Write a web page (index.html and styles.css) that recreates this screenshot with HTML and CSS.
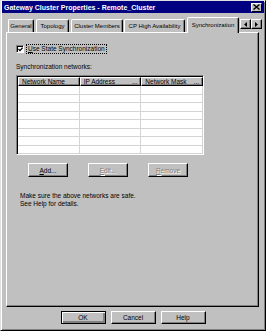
FILE: index.html
```html
<!DOCTYPE html>
<html>
<head>
    <link rel="stylesheet" href="styles.css">
    <title>Gateway Cluster Properties</title>
</head>
<body>
<div class="window">
    <div class="titlebar">
        <span class="title">Gateway Cluster Properties - Remote_Cluster</span>
        <span class="close">
            <svg width="7" height="6" viewBox="0 0 7 6"><path d="M0.5 0.5 L6.5 5.5 M6.5 0.5 L0.5 5.5" stroke="#000" stroke-width="1.4"/></svg>
        </span>
    </div>

    <div class="tabs">
        <div class="tab t-general">General</div>
        <div class="tab t-topology">Topology</div>
        <div class="tab t-members">Cluster Members</div>
        <div class="tab t-ha">CP High Availability</div>
        <div class="tab t-sync active">Synchronization</div>
        <div class="scroller">
            <span class="arrow"><svg width="3" height="5" viewBox="0 0 3 5"><path d="M3 0 L0 2.5 L3 5 Z" fill="#000"/></svg></span>
            <span class="arrow"><svg width="3" height="5" viewBox="0 0 3 5"><path d="M0 0 L3 2.5 L0 5 Z" fill="#000"/></svg></span>
        </div>
    </div>

    <div class="panel">
        <div class="check">
            <span class="box">
                <svg width="5" height="5" viewBox="0 0 5 5"><path d="M0.5 2 L2 3.6 L4.6 0.6" stroke="#000" stroke-width="1.3" fill="none"/></svg>
            </span>
            <span class="focus"><u>U</u>se State Synchronization</span>
        </div>

        <div class="caption">Synchronization networks:</div>

        <div class="list">
            <div class="list-head">
                <div class="col">Network Name</div>
                <div class="col">IP Address<span>...</span></div>
                <div class="col">Network Mask<span>...</span></div>
            </div>
            <div class="list-body">
                <div class="row"><div class="cell"></div><div class="cell"></div><div class="cell"></div></div>
                <div class="row"><div class="cell"></div><div class="cell"></div><div class="cell"></div></div>
                <div class="row"><div class="cell"></div><div class="cell"></div><div class="cell"></div></div>
                <div class="row"><div class="cell"></div><div class="cell"></div><div class="cell"></div></div>
                <div class="row"><div class="cell"></div><div class="cell"></div><div class="cell"></div></div>
                <div class="row"><div class="cell"></div><div class="cell"></div><div class="cell"></div></div>
                <div class="row"><div class="cell"></div><div class="cell"></div><div class="cell"></div></div>
                <div class="row"><div class="cell"></div><div class="cell"></div><div class="cell"></div></div>
            </div>
        </div>

        <div class="actions">
            <button class="btn"><u>A</u>dd...</button>
            <button class="btn" disabled><u>E</u>dit...</button>
            <button class="btn" disabled><u>R</u>emove</button>
        </div>

        <p class="note">Make sure the above networks are safe.<br>See Help for details.</p>
    </div>

    <div class="footer">
        <button class="btn default">OK</button>
        <button class="btn">Cancel</button>
        <button class="btn">Help</button>
    </div>
</div>
</body>
</html>
```

FILE: styles.css
```css
body
{
    margin:0;
    background-color:#c0c0c0;
    font-family:"Liberation Sans", Arial, sans-serif;
    font-size:6.5px;
    color:#000;
}
.window
{
    width:266px;
    height:331px;
    box-sizing:border-box;
    border:1px solid;
    border-color:#dfdfdf #000 #000 #dfdfdf;
    box-shadow:inset 1px 1px #fff, inset -1px -1px #808080;
    display:flex;
    flex-direction:column;
}
.titlebar
{
    height:12px;
    margin:0 1px;
    padding:0 2px;
    background-color:#000080;
    display:flex;
    align-items:center;
    justify-content:space-between;
}
.title
{
    color:#fff;
    font-weight:bold;
    font-size:7px;
}
.close
{
    width:11px;
    height:9px;
    box-sizing:border-box;
    background-color:#c0c0c0;
    border:1px solid;
    border-color:#fff #000 #000 #fff;
    display:flex;
    align-items:center;
    justify-content:center;
}
.close svg
{
    display:block;
}

/* tab strip */
.tabs
{
    height:19px;
    padding-left:7px;
    display:flex;
    align-items:flex-end;
    font-size:6px;
}
.tab
{
    height:13px;
    box-sizing:border-box;
    margin-right:2px;
    border:1px solid;
    border-bottom:none;
    border-color:#fff #000 transparent #fff;
    border-radius:2px 2px 0 0;
    box-shadow:inset -1px 0 #808080;
    display:flex;
    align-items:center;
    justify-content:center;
    white-space:nowrap;
}
.t-general { width:26px; }
.t-topology { width:33px; }
.t-members { width:52px; margin-right:1px; }
.t-ha { width:61px; }
.t-sync { width:52px; margin-right:1px; }
.tab.active
{
    height:16px;
    margin-bottom:-1px;
    padding-bottom:2px;
    background-color:#c0c0c0;
    position:relative;
    z-index:1;
}
.scroller
{
    display:flex;
    align-self:flex-start;
    margin-top:6px;
}
.arrow
{
    width:11px;
    height:10px;
    box-sizing:border-box;
    border:1px solid;
    border-color:#fff #000 #000 #fff;
    box-shadow:inset -1px -1px #808080;
    display:flex;
    align-items:center;
    justify-content:center;
}
.arrow svg
{
    display:block;
}

/* page body */
.panel
{
    height:275px;
    box-sizing:border-box;
    margin:0 6px 0 5px;
    padding:11px 0 0 9px;
    border:1px solid;
    border-color:#fff #000 #000 #fff;
    box-shadow:inset -1px -1px #808080;
}
.check
{
    display:flex;
    align-items:center;
    height:10px;
}
.box
{
    width:8px;
    height:8px;
    box-sizing:border-box;
    background-color:#fff;
    border:1px solid;
    border-color:#808080 #fff #fff #808080;
    box-shadow:inset 1px 1px #000;
    display:flex;
    align-items:center;
    justify-content:center;
    margin-right:2px;
}
.box svg
{
    display:block;
    margin:1px 0 0 1px;
}
.focus
{
    padding:0 1px;
    border:1px dotted #000;
    line-height:8px;
}
.caption
{
    margin-top:8px;
    height:10px;
    line-height:10px;
}
.list
{
    margin-top:3px;
    width:188px;
    box-sizing:border-box;
    border:1px solid;
    border-color:#808080 #fff #fff #808080;
    box-shadow:inset 1px 1px #000;
    background-color:#fff;
    padding:1px 0 0 1px;
}
.list-head
{
    display:flex;
    height:9px;
}
.col
{
    width:62px;
    box-sizing:border-box;
    background-color:#c0c0c0;
    border:1px solid;
    border-color:#fff #000 #000 #fff;
    box-shadow:inset -1px -1px #808080;
    padding:0 3px;
    display:flex;
    justify-content:space-between;
    align-items:center;
    line-height:7px;
    white-space:nowrap;
}
.list-body
{
    height:68px;
    overflow:hidden;
}
.row
{
    display:flex;
    height:8.5px;
    box-sizing:border-box;
    border-bottom:1px solid #d4d4d4;
}
.cell
{
    width:62px;
    box-sizing:border-box;
    border-right:1px solid #d4d4d4;
}
.actions
{
    display:flex;
    gap:20px;
    margin:8px 0 0 12px;
}
.btn
{
    width:40px;
    height:14px;
    box-sizing:border-box;
    padding:0;
    font-family:inherit;
    font-size:6.5px;
    color:#000;
    background-color:#c0c0c0;
    border:1px solid;
    border-color:#fff #000 #000 #fff;
    box-shadow:inset -1px -1px #808080;
}
.btn:disabled
{
    color:#808080;
    text-shadow:1px 1px #fff;
}
.note
{
    margin:15px 0 0 4px;
    line-height:8px;
}
.footer
{
    display:flex;
    justify-content:center;
    gap:5px;
    margin-top:4px;
}
.footer .btn
{
    width:45px;
    height:13px;
}
.footer .btn.default
{
    border-color:#000;
    box-shadow:inset 1px 1px #fff, inset -2px -2px #808080;
}
```
